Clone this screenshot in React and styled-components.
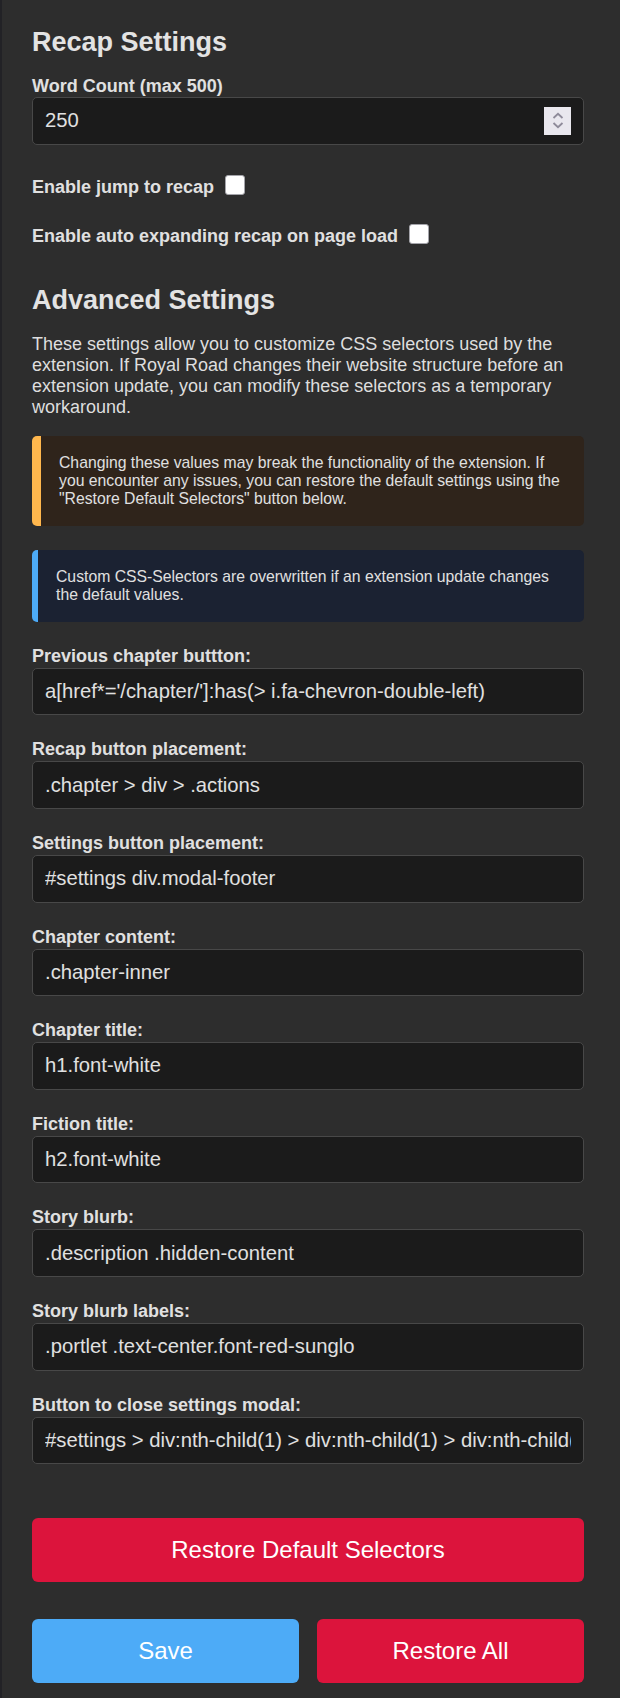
import React from "react";
import styled, { createGlobalStyle } from "styled-components";

const GlobalStyle = createGlobalStyle`
    body {
        margin: 0;
        background: #2d2d2d;
        font-family: "Liberation Sans", Arial, sans-serif;
    }
`;

const Page = styled.div`
    box-sizing: border-box;
    min-height: 100vh;
    border-left: 2px solid #222226;
    padding: 27px 36px 15px 30px;
    color: #e0e0e0;
`;

const Heading = styled.h2`
    font-size: 27px;
    font-weight: bold;
    margin: ${(p) => (p.$spaced ? "35.5px" : "0")} 0 18px;
    color: #e3e3e3;
`;

const Label = styled.label`
    display: block;
    font-size: 18px;
    font-weight: bold;
    margin-bottom: ${(p) => (p.$tight ? 0 : 1)}px;
`;

const Field = styled.div`
    margin-bottom: 24px;
`;

const TextInput = styled.input`
    display: block;
    box-sizing: border-box;
    width: 100%;
    height: 47.6px;
    padding: 0 12px;
    background: #1b1b1b;
    border: 1px solid #484848;
    border-radius: 5px;
    color: #e0e0e0;
    font-family: inherit;
    font-size: 20.25px;
    outline: none;
`;

const NumberBox = styled.div`
    display: flex;
    align-items: center;
    box-sizing: border-box;
    height: 47.6px;
    padding: 0 12px;
    background: #1b1b1b;
    border: 1px solid #484848;
    border-radius: 5px;
`;

const NumberInput = styled.input`
    flex: 1;
    min-width: 0;
    padding: 0;
    background: transparent;
    border: none;
    color: #e0e0e0;
    font-family: inherit;
    font-size: 20.25px;
    outline: none;
`;

const Spinner = styled.div`
    display: flex;
    flex-direction: column;
    align-items: center;
    justify-content: center;
    gap: 3px;
    width: 27px;
    height: 28px;
    background: #e9e7ee;
`;

const CheckRow = styled.label`
    display: flex;
    align-items: center;
    gap: 11px;
    font-size: 18px;
    font-weight: bold;
    margin-top: ${(p) => p.$top}px;
`;

const Check = styled.input`
    appearance: none;
    box-sizing: border-box;
    width: 20px;
    height: 20px;
    margin: 0 0 5px;
    background: #fff;
    border: 1px solid #a4a4aa;
    border-radius: 3px;
`;

const Intro = styled.p`
    margin: 0 0 18px;
    font-size: 18px;
    color: #dedede;
`;

const tones = {
    warning: { bar: "#ffb74d", width: 9, bg: "#2f241b" },
    info: { bar: "#4dabf7", width: 6, bg: "#1b2232" },
};

const Callout = styled.div`
    margin-bottom: 24px;
    padding: 18px;
    border-left: ${(p) => tones[p.$tone].width}px solid ${(p) => tones[p.$tone].bar};
    border-radius: 5px;
    background: ${(p) => tones[p.$tone].bg};
    font-size: 15.75px;
    color: #e0e0e0;
`;

const Actions = styled.div`
    margin-top: 54px;
`;

const ButtonRow = styled.div`
    display: flex;
    gap: 18px;
    margin-top: 36.7px;
`;

const Button = styled.button`
    flex: 1;
    width: 100%;
    padding: 18px;
    border: none;
    border-radius: 6px;
    background: ${(p) => (p.$variant === "primary" ? "#4dabf7" : "#dc143c")};
    color: #fff;
    font-family: inherit;
    font-size: 24px;
    cursor: pointer;
`;

const Chevron = ({ up }) => (
    <svg width="12" height="7" viewBox="0 0 12 7">
        <path
            d={up ? "M1.5 6 L6 1.8 L10.5 6" : "M1.5 1 L6 5.2 L10.5 1"}
            fill="none"
            stroke="#8e8a99"
            strokeWidth="1.8"
        />
    </svg>
);

const selectors = [
    ["Previous chapter buttton:", "a[href*='/chapter/']:has(> i.fa-chevron-double-left)"],
    ["Recap button placement:", ".chapter > div > .actions"],
    ["Settings button placement:", "#settings div.modal-footer"],
    ["Chapter content:", ".chapter-inner"],
    ["Chapter title:", "h1.font-white"],
    ["Fiction title:", "h2.font-white"],
    ["Story blurb:", ".description .hidden-content"],
    ["Story blurb labels:", ".portlet .text-center.font-red-sunglo"],
    ["Button to close settings modal:", "#settings > div:nth-child(1) > div:nth-child(1) > div:nth-child(1) > button.close"],
];

const App = () => {
    return (
        <Page>
            <GlobalStyle />
            <Heading>Recap Settings</Heading>
            <Label $tight>Word Count (max 500)</Label>
            <NumberBox>
                <NumberInput defaultValue="250" />
                <Spinner>
                    <Chevron up />
                    <Chevron />
                </Spinner>
            </NumberBox>
            <CheckRow $top={30}>
                Enable jump to recap <Check type="checkbox" />
            </CheckRow>
            <CheckRow $top={24.7}>
                Enable auto expanding recap on page load <Check type="checkbox" />
            </CheckRow>

            <Heading $spaced>Advanced Settings</Heading>
            <Intro>
                These settings allow you to customize CSS selectors used by the extension. If Royal Road
                changes their website structure before an extension update, you can modify these selectors
                as a temporary workaround.
            </Intro>
            <Callout $tone="warning">
                Changing these values may break the functionality of the extension. If you encounter any
                issues, you can restore the default settings using the "Restore Default Selectors" button
                below.
            </Callout>
            <Callout $tone="info">
                Custom CSS-Selectors are overwritten if an extension update changes the default values.
            </Callout>

            {selectors.map(([label, value]) => (
                <Field key={label}>
                    <Label>{label}</Label>
                    <TextInput defaultValue={value} />
                </Field>
            ))}

            <Actions>
                <Button>Restore Default Selectors</Button>
                <ButtonRow>
                    <Button $variant="primary">Save</Button>
                    <Button>Restore All</Button>
                </ButtonRow>
            </Actions>
        </Page>
    );
};

export default App;
